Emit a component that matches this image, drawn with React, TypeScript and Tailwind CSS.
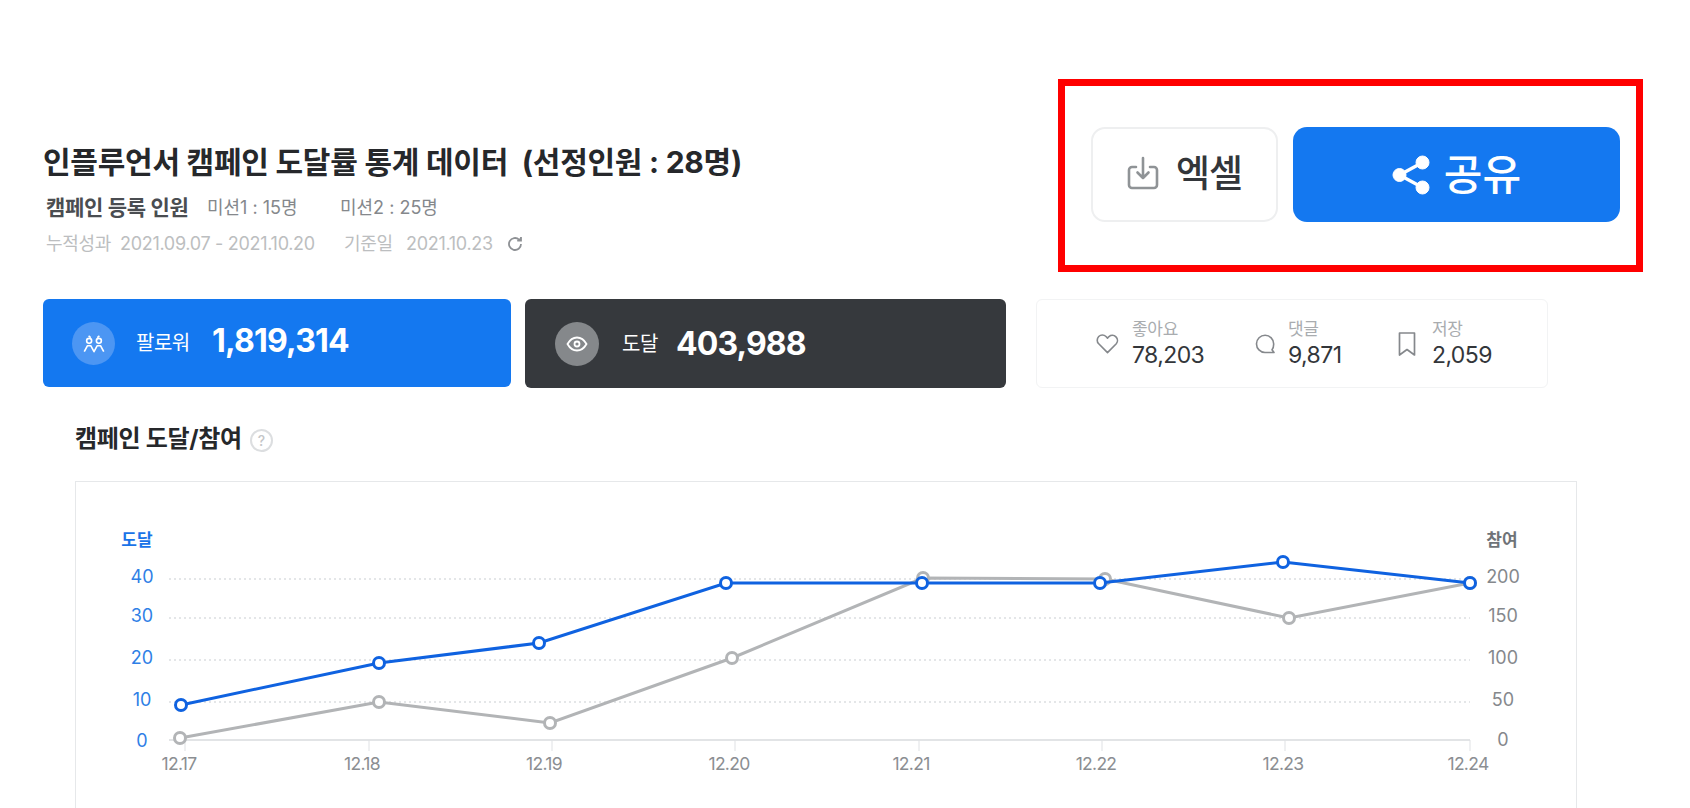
import React from "react";

const X_LABELS: [string, number][] = [["12.17", 103], ["12.18", 286], ["12.19", 468], ["12.20", 653], ["12.21", 835], ["12.22", 1020], ["12.23", 1207], ["12.24", 1392]];
const TICKS = [109, 293, 476, 659, 843, 1026, 1209, 1394];
const GRID = [98, 137, 179, 221];
const LEFT: [string, number][] = [["40", 96], ["30", 135], ["20", 177], ["10", 219], ["0", 260]];
const RIGHT: [string, number][] = [["200", 96], ["150", 135], ["100", 177], ["50", 219], ["0", 259]];
const BLUE: [number, number][] = [[105, 224], [303, 182], [463, 162], [650, 102], [846, 102], [1024, 102], [1207, 81], [1394, 102]];
const GRAY: [number, number][] = [[104, 257], [303, 221], [474, 242], [656, 177], [847, 97], [1029, 98], [1213, 137], [1394, 102]];

function Line({ pts, color }: { pts: [number, number][]; color: string }) {
  return (
    <>
      <polyline points={pts.map((p) => p.join(",")).join(" ")} fill="none" stroke={color} strokeWidth={3} />
      {pts.map(([x, y]) => (
        <circle key={x} cx={x} cy={y} r={5.5} fill="#fff" stroke={color} strokeWidth={3} />
      ))}
    </>
  );
}

function Chart() {
  return (
    <svg width="1500" height="326" viewBox="0 1 1500 326" className="block" style={{ fontFamily: "Inter, 'Noto Sans CJK KR', sans-serif" }}>
      {GRID.map((y) => (
        <line key={y} x1={93} x2={1394} y1={y} y2={y} stroke="#dcdee1" strokeWidth={1.3} strokeDasharray="2 3" />
      ))}
      <line x1={93} x2={1394} y1={259} y2={259} stroke="#e2e4e6" strokeWidth={2} />
      {TICKS.map((x) => (
        <line key={x} x1={x} x2={x} y1={259} y2={270} stroke="#dfe1e4" strokeWidth={1} />
      ))}
      <text x={61} y={65} textAnchor="middle" fontSize={17} fontWeight={700} fill="#1a73e8">도달</text>
      <text x={1426} y={65} textAnchor="middle" fontSize={17} fontWeight={700} fill="#6f7378">참여</text>
      {LEFT.map(([t, y]) => (
        <text key={t} x={66} y={y + 6} textAnchor="middle" fontSize={18} fill="#2f7fe6">{t}</text>
      ))}
      {RIGHT.map(([t, y]) => (
        <text key={t} x={1427} y={y + 6} textAnchor="middle" fontSize={18} fill="#85888c">{t}</text>
      ))}
      {X_LABELS.map(([t, x]) => (
        <text key={t} x={x} y={289} textAnchor="middle" fontSize={17.5} letterSpacing={-0.7} fill="#8b8e92">{t}</text>
      ))}
      <Line pts={GRAY} color="#b2b4b6" />
      <Line pts={BLUE} color="#0f62e0" />
    </svg>
  );
}

function PeopleIcon() {
  return (
    <svg width="26" height="26" viewBox="0 0 24 24" fill="none" stroke="#fff" strokeWidth="1.5">
      <circle cx="7.500" cy="10" r="2.300" />
      <circle cx="16.500" cy="10" r="2.300" />
      <path d="M3 20l3-5.500h3l3 5.500 3-5.500h3l3 5.500" strokeLinejoin="round" />
      <path d="M7 5.500l2 1.500M17 5.500l-2 1.500" />
    </svg>
  );
}

function EyeIcon() {
  return (
    <svg width="24" height="24" viewBox="0 0 24 24" fill="none" stroke="#fff" strokeWidth="1.8">
      <path d="M2.500 12C5 7.500 8.200 5.500 12 5.500s7 2 9.500 6.500c-2.500 4.500-5.700 6.500-9.500 6.500S5 16.500 2.500 12z" />
      <circle cx="12" cy="12" r="2.500" />
    </svg>
  );
}

function Stat({ icon, label, value, gap }: { icon: React.ReactNode; label: string; value: string; gap: string }) {
  return (
    <div className={`flex items-center ${gap}`}>
      {icon}
      <div className="flex flex-col pb-[2px]">
        <span className="text-[17px] leading-[24px] tracking-[-0.3px] text-[#a9acaf]">{label}</span>
        <span className="text-[23px] leading-[28px] tracking-[-0.6px] text-[#33363a]">{value}</span>
      </div>
    </div>
  );
}

export default function App() {
  return (
    <div className="relative h-[808px] w-[1690px] overflow-hidden bg-white pl-[43px] pt-[127px] font-['Inter','Noto_Sans_CJK_KR',sans-serif]">
      <div className="absolute left-[1058px] top-[79px] h-[193px] w-[585px] border-[7px] border-[#ff0000]" />

      <header className="flex h-[172px] items-start">
        <div className="w-[1048px] pt-[17px]">
          <h1 className="whitespace-pre text-[30px] font-bold leading-[36px] tracking-[-0.25px] text-[#26282b]">인플루언서 캠페인 도달률 통계 데이터  (선정인원 : 28명)</h1>
          <div className="mt-[15px] flex pl-[3px] text-[18px] leading-[26px]">
            <span className="w-[161px] text-[21px] font-bold tracking-[-0.3px] text-[#4a4d51]">캠페인 등록 인원</span>
            <span className="w-[133px] text-[#85888c]">미션1 : 15명</span>
            <span className="text-[#85888c]">미션2 : 25명</span>
          </div>
          <div className="mt-[11px] flex items-center pl-[3px] text-[18px] leading-[24px] tracking-[-0.3px] text-[#bcbec0]">
            <span className="w-[74px]">누적성과</span>
            <span className="w-[224px]">2021.09.07 - 2021.10.20</span>
            <span className="w-[62px]">기준일</span>
            <span className="w-[100px]">2021.10.23</span>
            <svg width="18" height="18" viewBox="0 0 24 24" fill="none" stroke="#8e9195" strokeWidth="2.4">
              <path d="M20 12a8 8 0 1 1-2.600-5.900" />
              <path d="M20 2.500v5h-5" fill="#8e9195" />
            </svg>
          </div>
        </div>
        <div className="flex gap-[15px]">
          <button className="flex h-[95px] w-[187px] items-center justify-center gap-[17px] rounded-[14px] border-2 border-[#eeeff0] bg-white pb-[2px] text-[37px] font-medium tracking-[-1px] text-[#33363a]">
            <svg width="32" height="36" viewBox="0 0 32 36" fill="none" stroke="#8f9396" strokeWidth="2.6" strokeLinecap="round" strokeLinejoin="round">
              <path d="M16 2v20M10.500 16.500L16 22l5.500-5.500" />
              <path d="M9 11H5a3 3 0 0 0-3 3v15a3 3 0 0 0 3 3h22a3 3 0 0 0 3-3V14a3 3 0 0 0-3-3h-4" />
            </svg>
            엑셀
          </button>
          <button className="flex h-[95px] w-[327px] items-center justify-center gap-[14px] rounded-[14px] bg-[#1478f0] text-[42px] font-medium text-white">
            <svg width="38" height="40" viewBox="0 0 38 40" fill="#fff" stroke="#fff">
              <circle cx="30.500" cy="7.500" r="6.500" />
              <circle cx="7.500" cy="20" r="6.500" />
              <circle cx="30.500" cy="32.500" r="6.500" />
              <path d="M30.500 7.500L7.500 20l23 12.500" fill="none" strokeWidth="3.400" />
            </svg>
            공유
          </button>
        </div>
      </header>

      <section className="mr-[142px] flex items-start">
        <div className="flex h-[88px] w-[468px] items-center rounded-[6px] bg-[#1478f0] pl-[29px] text-white">
          <div className="flex h-[43px] w-[43px] items-center justify-center rounded-full bg-[#4c96f3]">
            <PeopleIcon />
          </div>
          <span className="ml-[21px] w-[76px] text-[20px] tracking-[-0.5px]">팔로워</span>
          <span className="pb-[5px] text-[32px] font-bold tracking-[-0.8px]">1,819,314</span>
        </div>
        <div className="ml-[14px] flex h-[89px] w-[481px] items-center rounded-[6px] bg-[#36393d] pl-[30px] text-white">
          <div className="flex h-[44px] w-[44px] items-center justify-center rounded-full bg-[#85888b]">
            <EyeIcon />
          </div>
          <span className="ml-[23px] w-[54px] text-[20px] tracking-[-0.5px]">도달</span>
          <span className="text-[32px] font-bold tracking-[-0.9px]">403,988</span>
        </div>
        <div className="ml-[30px] flex h-[89px] w-[512px] items-center rounded-[6px] border border-[#f2f3f4] pl-[59px]">
          <div className="w-[159px]">
            <Stat gap="gap-[13px]" label="좋아요" value="78,203" icon={
              <svg width="23" height="21" viewBox="0 0 24 22" fill="none" stroke="#85888c" strokeWidth="1.7" strokeLinejoin="round">
                <path d="M12 20.500L2.800 11.300a5.400 5.400 0 0 1 0-7.600 5.400 5.400 0 0 1 7.600 0L12 5.300l1.600-1.600a5.400 5.400 0 0 1 7.600 7.600z" />
              </svg>
            } />
          </div>
          <div className="w-[143px]">
            <Stat gap="gap-[13px]" label="댓글" value="9,871" icon={
              <svg width="20" height="20" viewBox="0 0 20 20" fill="none" stroke="#85888c" strokeWidth="1.6" strokeLinejoin="round">
                <path d="M19 18.500h-9a8.600 8.600 0 1 1 8.700-8.600c0 3-.6 4.500-1.700 5.800z" />
              </svg>
            } />
          </div>
          <Stat gap="gap-[16px]" label="저장" value="2,059" icon={
            <svg width="18" height="24" viewBox="0 0 18 24" fill="none" stroke="#85888c" strokeWidth="1.7" strokeLinejoin="round">
              <path d="M1.500 1h15v22L9 17.500 1.500 23z" />
            </svg>
          } />
        </div>
      </section>

      <section className="mt-[35px] pl-[32px]">
        <div className="flex items-center gap-[8px]">
          <h2 className="text-[24px] font-bold leading-[32px] tracking-[-0.3px] text-[#26282b]">캠페인 도달/참여</h2>
          <span className="mt-[2px] flex h-[23px] w-[23px] items-center justify-center rounded-full border-2 border-[#dcdee0] text-[14px] font-medium text-[#c4c6c8]">?</span>
        </div>
        <div className="mt-[26px] h-[400px] w-[1502px] border border-[#e6e8ea] bg-white">
          <Chart />
        </div>
      </section>
    </div>
  );
}
